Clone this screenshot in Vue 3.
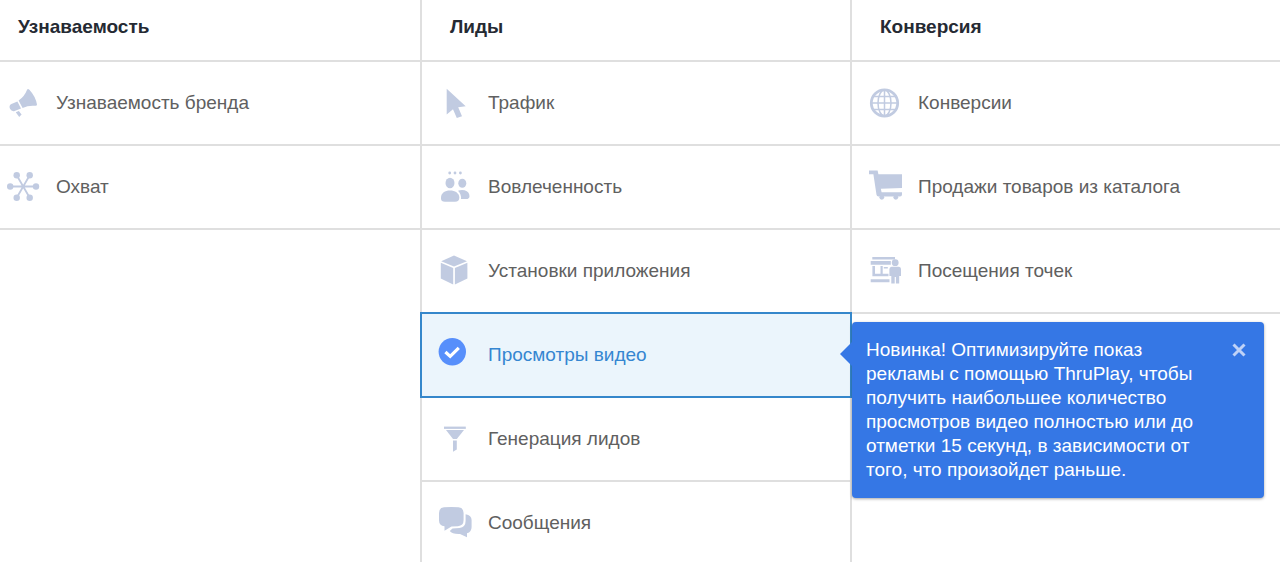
<script setup>
import { ref } from 'vue'

const columns = [
  {
    title: 'Узнаваемость',
    items: [
      { id: 'brand', label: 'Узнаваемость бренда' },
      { id: 'reach', label: 'Охват' },
    ],
  },
  {
    title: 'Лиды',
    items: [
      { id: 'traffic', label: 'Трафик' },
      { id: 'engagement', label: 'Вовлеченность' },
      { id: 'installs', label: 'Установки приложения' },
      { id: 'video', label: 'Просмотры видео', tip: true },
      { id: 'leads', label: 'Генерация лидов' },
      { id: 'messages', label: 'Сообщения' },
    ],
  },
  {
    title: 'Конверсия',
    items: [
      { id: 'conversions', label: 'Конверсии' },
      { id: 'catalog', label: 'Продажи товаров из каталога' },
      { id: 'visits', label: 'Посещения точек' },
    ],
  },
]

const selected = ref('video')
const tipOpen = ref(true)
</script>

<template>
  <main class="objectives">
    <section v-for="col in columns" :key="col.title" class="column">
      <h2 class="heading">{{ col.title }}</h2>
      <ul class="list">
        <li
          v-for="item in col.items"
          :key="item.id"
          class="item"
          :class="{ selected: selected === item.id }"
        >
          <button
            type="button"
            class="choice"
            :aria-pressed="selected === item.id"
            @click="selected = item.id"
          >
            <svg class="icon" viewBox="0 0 34 34" aria-hidden="true">
              <template v-if="selected === item.id">
                <circle class="disc" cx="14.3" cy="13.7" r="13.7" />
                <path class="tick" d="M7.4 14 12.2 18.4 20.8 9.8" />
              </template>
              <template v-else-if="item.id === 'brand'">
                <path d="M21.2 3.4q1-.8 2.4.6 6 6.500 7.400 14.600 0 1.200-1.400 1.200-7-.8-13 2.200L12.600 14.400Q18.400 10.600 21.200 3.400Z" />
                <path d="M11.400 15.400 15 22.600 8.600 25Q5.600 25.800 4 22.800 2.600 19.400 5.400 18Z" />
                <path d="M9.800 26.200 12.800 25 15.600 28.600 13.200 31Z" />
              </template>
              <template v-else-if="item.id === 'reach'">
                <path class="spokes" d="M4 16.500H30M10.700 5.200 23.700 27.700M23.700 5.200 10.700 27.700" />
                <circle cx="10.700" cy="5.200" r="3.200" />
                <circle cx="23.700" cy="5.200" r="3.200" />
                <circle cx="4.200" cy="16.500" r="3.200" />
                <circle cx="30" cy="16.500" r="3.200" />
                <circle cx="10.700" cy="27.700" r="3.200" />
                <circle cx="23.700" cy="27.700" r="3.200" />
              </template>
              <path
                v-else-if="item.id === 'traffic'"
                d="M8.700 2.700 27.700 20.300 20.200 21.200 24 30.200 18.800 32 15 23.200 8.700 28.500Z"
              />
              <template v-else-if="item.id === 'engagement'">
                <circle cx="11.700" cy="3" r="1.400" />
                <circle cx="17" cy="3" r="1.400" />
                <circle cx="22.400" cy="3" r="1.400" />
                <ellipse cx="12" cy="13" rx="4.500" ry="5.300" />
                <ellipse cx="24.300" cy="13.300" rx="4" ry="4.500" />
                <path d="M3 27.500C3 23 7 20.400 12 20.400S21.300 23 21.300 27.500Q21.300 31.800 17 31.800H7Q3 31.800 3 28.500Z" />
                <path d="M20 20.800Q23 19.400 26.600 20.200C30 21 31.500 23.600 31.500 26.200Q31.500 29 28 29H23Q23.400 24 20 20.800Z" />
              </template>
              <template v-else-if="item.id === 'installs'">
                <path d="M16 1.500 29 7.300 16 12.500 3.200 7.300Z" />
                <path d="M2.800 8.800 15.200 13.900V30.600L2.800 24.600Z" />
                <path d="M29.400 8.800 16.900 13.900V30.600L29.400 24.600Z" />
              </template>
              <template v-else-if="item.id === 'leads'">
                <path d="M6 4.600H27.800V6.900H6Z" />
                <path d="M8 8.100H26L18.800 17H15Z" />
                <path d="M15 18.600H18.800V27.400L15 29.800Z" />
              </template>
              <template v-else-if="item.id === 'messages'">
                <path d="M6 1.300Q13.500.5 20.500 1.300 25.600 1.800 25.600 7V14Q25.600 19.700 20 20.200L13.500 20.500 6.500 24.800V20.300Q1 19.500 1 14.500V7Q1 1.800 6 1.300Z" />
                <path d="M27.600 8.200Q33.600 9.200 33.600 14V21Q33.600 26 29 27.300V31.300L22 27.900Q14 28.200 11.800 25L14.500 22.600 21.500 22.100Q27.600 21.200 27.600 15Z" />
              </template>
              <template v-else-if="item.id === 'conversions'">
                <circle class="rim" cx="16.500" cy="17" r="13.200" />
                <path class="grid" d="M16.500 4V30M4 17H29M6 10.500H27M6 23.500H27" />
                <ellipse class="grid" cx="16.500" cy="17" rx="6.500" ry="13" />
              </template>
              <template v-else-if="item.id === 'catalog'">
                <path d="M1 .5H9.600L10.400 4.200H34V18L12.800 18.800 13.600 22.300H34V24.600Q34 26.400 32 26.500H10.500Q8.800 26.500 8.500 24.800L5.400 4.200H1Z" />
                <circle cx="13.800" cy="27.300" r="2.400" />
                <circle cx="27.800" cy="27.300" r="2.400" />
              </template>
              <template v-else-if="item.id === 'visits'">
                <path d="M4.300 3H27V5.500H4.300ZM2.700 7H22.800V10.800H2.700ZM2.700 25.300H21.500V28.200H2.700Z" />
                <path d="M4.400 12H7V19.700H12.500V12H14.700V19.700H20.500V22.300H4.400ZM15.800 13H19.800V14.600H15.800Z" />
                <circle cx="27.200" cy="8.700" r="3.400" />
                <path d="M23.500 12.800H31Q33 13 33 15V22H31.200V29.500H27.900V23H26.700V29.500H23.300V22H21.400V15Q21.600 13 23.500 12.800Z" />
              </template>
            </svg>
            <span>{{ item.label }}</span>
          </button>
          <aside v-if="item.tip && tipOpen" class="tip">
            <p class="tip-text">
              Новинка! Оптимизируйте показ рекламы с помощью ThruPlay, чтобы получить наибольшее
              количество просмотров видео полностью или до отметки 15 секунд, в зависимости от
              того, что произойдет раньше.
            </p>
            <button type="button" class="close" aria-label="Закрыть" @click="tipOpen = false">
              <svg viewBox="0 0 14 14" aria-hidden="true"><path d="M1.500 1.500 12.500 12.500M12.500 1.500 1.500 12.500" /></svg>
            </button>
          </aside>
        </li>
      </ul>
    </section>
  </main>
</template>

<style>
body {
  margin: 0;
  background: #fff;
}
</style>

<style scoped>
.objectives {
  display: grid;
  grid-template-columns: 422fr 430fr 428fr;
  min-height: 100vh;
  font-family: "Liberation Sans", Arial, sans-serif;
  font-size: 19px;
  line-height: 22px;
  color: #606060;
}
.column {
  min-width: 0;
  border-right: 2px solid #dfdfdf;
}
.column:last-child {
  border-right: 0;
}
.heading {
  margin: 0;
  padding: 16px 28px 22px;
  border-bottom: 2px solid #dfdfdf;
  font-size: 19px;
  line-height: 22px;
  font-weight: 700;
  color: #252a33;
}
.column:first-child .heading {
  padding-left: 18px;
}
.list {
  margin: 0;
  padding: 0;
  list-style: none;
}
.item {
  position: relative;
  border-bottom: 2px solid #dfdfdf;
}
.choice {
  display: flex;
  align-items: center;
  gap: 16px;
  width: 100%;
  padding: 24px 16px;
  border: 0;
  background: none;
  font: inherit;
  color: inherit;
  text-align: left;
  cursor: pointer;
}
.column:first-child .choice {
  padding-left: 6px;
}
.item:nth-child(6) {
  border-bottom: 0;
}
.item:nth-child(6) .choice {
  padding-bottom: 20px;
}
.item.selected {
  margin: -2px -2px 0;
  border: 2px solid #3587cb;
  background: #ebf5fc;
  color: #3586d1;
}
.icon {
  flex: none;
  width: 34px;
  height: 34px;
  fill: #c1cbe1;
}
.icon .disc {
  fill: #578ffb;
}
.icon .tick {
  fill: none;
  stroke: #fff;
  stroke-width: 3.2;
}
.icon .spokes {
  stroke: #c1cbe1;
  stroke-width: 1.8;
}
.icon .rim {
  fill: none;
  stroke: #c1cbe1;
  stroke-width: 2.8;
}
.icon .grid {
  fill: none;
  stroke: #c1cbe1;
  stroke-width: 1.5;
}
.tip {
  position: absolute;
  z-index: 2;
  top: 8px;
  left: calc(100% + 2px);
  display: flex;
  align-items: flex-start;
  justify-content: space-between;
  box-sizing: border-box;
  width: 412px;
  padding: 16px 14px;
  border-radius: 4px;
  background: #3577e5;
  box-shadow: 0 1px 3px rgba(0, 0, 0, 0.35);
  color: #fff;
}
.tip::before {
  content: "";
  position: absolute;
  top: 20px;
  left: -12px;
  border: solid transparent;
  border-width: 12px 12px 12px 0;
  border-right-color: #3577e5;
}
.tip-text {
  margin: 0;
  max-width: 340px;
  line-height: 24px;
}
.close {
  display: flex;
  padding: 5px 4px;
  border: 0;
  background: none;
  cursor: pointer;
}
.close svg {
  width: 14px;
  height: 14px;
  fill: none;
  stroke: #bfd2f7;
  stroke-width: 3;
}
</style>
